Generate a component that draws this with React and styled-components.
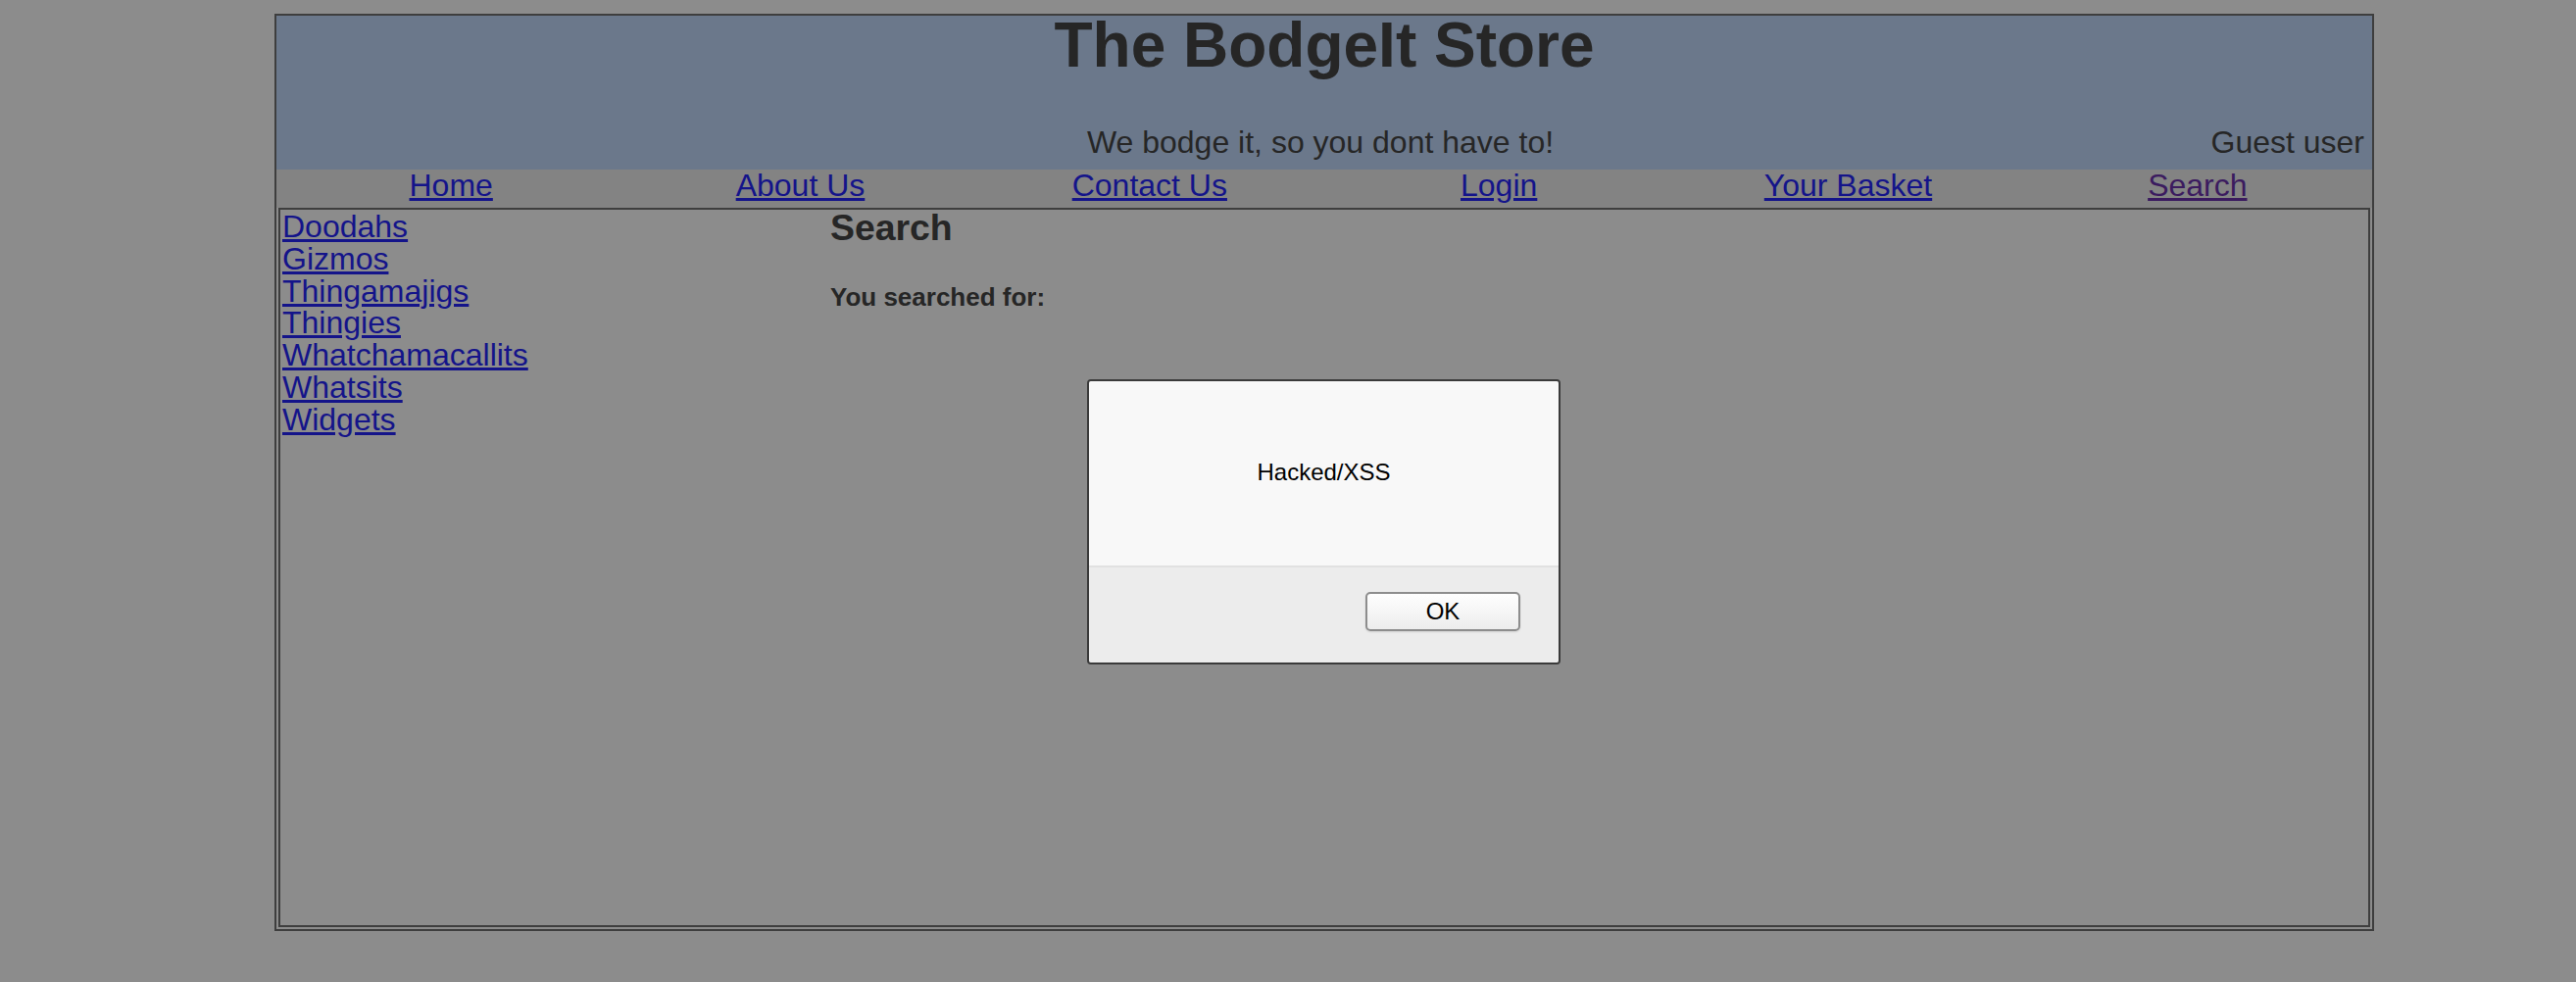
import React from 'react';
import styled, {createGlobalStyle} from 'styled-components';

const navLinks = [
  {label: 'Home'},
  {label: 'About Us'},
  {label: 'Contact Us'},
  {label: 'Login'},
  {label: 'Your Basket'},
  {label: 'Search', visited: true}
];

const categories = ['Doodahs', 'Gizmos', 'Thingamajigs', 'Thingies', 'Whatchamacallits', 'Whatsits', 'Widgets'];

export default function App() {
  return (
    <>
      <GlobalStyle />
      <Page>
        <Store>
          <Header>
            <Title>The BodgeIt Store</Title>
            <SubRow>
              <span />
              <Tagline>We bodge it, so you dont have to!</Tagline>
              <User>Guest user</User>
            </SubRow>
          </Header>

          <Nav>
            {navLinks.map((link) =>
              <NavCell key={link.label}>
                <Link href="#" $visited={link.visited}>{link.label}</Link>
              </NavCell>
            )}
          </Nav>

          <Body>
            <Inner>
              <Sidebar>
                {categories.map((name) =>
                  <SideLink key={name} href="#">{name}</SideLink>
                )}
              </Sidebar>
              <Main>
                <Heading>Search</Heading>
                <Searched>You searched for:</Searched>
              </Main>
            </Inner>
          </Body>
        </Store>

        <Alert>
          <AlertBody>
            <Message>Hacked/XSS</Message>
          </AlertBody>
          <AlertFooter>
            <OkButton>OK</OkButton>
          </AlertFooter>
        </Alert>
      </Page>
    </>
  );
}

const GlobalStyle = createGlobalStyle`
  html, body {
    margin: 0;
    padding: 0;
    background: #8c8c8c;
  }
  body {
    font-family: "Liberation Sans", Arial, Helvetica, sans-serif;
    color: #262626;
  }
`;

const Page = styled.div`
  position: relative;
  min-height: 1002px;
  padding-top: 14px;
  box-sizing: border-box;
`;

const Store = styled.div`
  margin-left: 280px;
  width: 2142px;
  box-sizing: border-box;
  border: 2px solid #3e3e3e;
`;

const Header = styled.div`
  background: #6b788b;
  padding: 4px 0 9px;
  text-align: center;
`;

const Title = styled.h1`
  margin: 0;
  font-size: 64px;
  line-height: 52px;
  font-weight: bold;
  color: #262626;
`;

const SubRow = styled.div`
  display: grid;
  grid-template-columns: 30% 40% 30%;
  margin-top: 55px;
  padding-right: 8px;
  font-size: 32px;
  line-height: 37px;
  color: #262626;
`;

const Tagline = styled.span`
  text-align: center;
  white-space: nowrap;
`;

const User = styled.span`
  text-align: right;
`;

const Nav = styled.div`
  display: grid;
  grid-template-columns: repeat(6, 1fr);
  height: 39px;
  background: #838383;
`;

const NavCell = styled.div`
  padding-top: 2px;
  text-align: center;
  font-size: 32px;
  line-height: 28px;
`;

const Link = styled.a`
  color: ${(p) => (p.$visited ? '#3b1b5f' : '#14148a')};
  text-decoration: underline;
`;

const Body = styled.div`
  padding: 0 2px 2px;
`;

const Inner = styled.div`
  display: grid;
  grid-template-columns: 559px 1fr;
  height: 734px;
  box-sizing: border-box;
  border: 2px solid #3e3e3e;
  padding: 0 2px;
`;

const Sidebar = styled.div`
  display: flex;
  flex-direction: column;
  align-items: flex-start;
  padding-top: 1px;
  font-size: 32px;
  line-height: 32.8px;
`;

const SideLink = styled.a`
  color: #14148a;
  text-decoration: underline;
`;

const Main = styled.div`
  padding-top: 2px;
`;

const Heading = styled.h3`
  margin: 0;
  font-size: 37.4px;
  line-height: 32px;
  font-weight: bold;
`;

const Searched = styled.div`
  margin-top: 40px;
  font-size: 26px;
  line-height: 30px;
  font-weight: bold;
`;

const Alert = styled.div`
  position: absolute;
  left: 1109px;
  top: 387px;
  width: 483px;
  height: 291px;
  box-sizing: border-box;
  border: 2px solid #3a3a3a;
  border-radius: 4px;
  overflow: hidden;
  display: flex;
  flex-direction: column;
  font-family: "Liberation Sans", Arial, Helvetica, sans-serif;
  color: #000;
`;

const AlertBody = styled.div`
  height: 190px;
  box-sizing: border-box;
  padding-top: 79px;
  background: #f8f8f8;
  border-bottom: 2px solid #e1e1e1;
  text-align: center;
`;

const Message = styled.div`
  font-size: 24px;
  line-height: 27px;
`;

const AlertFooter = styled.div`
  flex: 1;
  display: flex;
  justify-content: flex-end;
  align-items: flex-start;
  padding: 25px 39px 0 0;
  background: #ececec;
`;

const OkButton = styled.button`
  display: flex;
  align-items: center;
  justify-content: center;
  width: 158px;
  height: 40px;
  box-sizing: border-box;
  padding: 0 0 1px;
  border: 2px solid #8d8d8d;
  border-radius: 5px;
  background: linear-gradient(#fefefe, #ededed);
  box-shadow: 0 1px 2px rgba(0, 0, 0, 0.12);
  font-family: "Liberation Sans", Arial, Helvetica, sans-serif;
  font-size: 24px;
  line-height: 24px;
  color: #000;
`;
